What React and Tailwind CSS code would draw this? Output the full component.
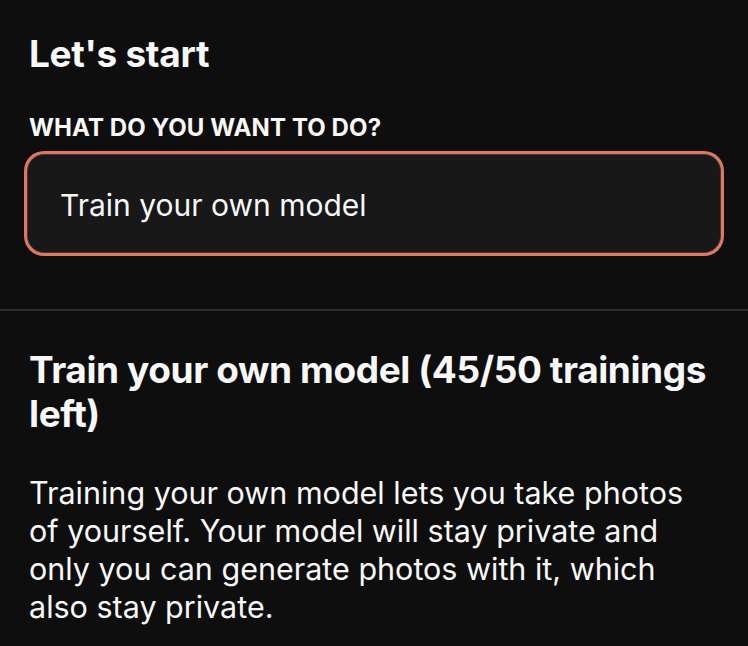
export default function App() {
  return (
    <div className="min-h-[646px] w-full bg-[#0e0e0e] text-[#f7f7f7]" style={{ fontFamily: 'Inter, "Noto Sans", sans-serif' }}>
      <div className="h-[311px] border-b-2 border-[#2f2f2f] px-[27px] pt-[32px]">
        <h1 className="pl-[2px] text-[37px] font-bold leading-[44px] tracking-[-0.3px]">Let's start</h1>
        <div className="mt-[37px] pl-[2px] text-[24px] font-bold uppercase leading-[30px] tracking-[0.1px]">What do you want to do?</div>
        <div className="mt-[11px] flex h-[99px] items-center rounded-[17px] border border-[#3a3a3a] bg-[#181818] pt-[3px] pl-[32px] text-[30px] leading-[36px] ring-[3px] ring-[#e2775e]">
          Train your own model
        </div>
      </div>
      <div className="pl-[29px] pr-[19px] pt-[37px] pb-[20px]">
        <h2 className="text-[37px] font-bold leading-[44px] tracking-[-0.4px]">Train your own model (45/50 trainings left)</h2>
        <p className="mt-[38px] max-w-[672px] text-[30.5px] leading-[38px]">
          Training your own model lets you take photos of yourself. Your model will stay private and only you can generate photos with it, which also stay private.
        </p>
      </div>
    </div>
  );
}
